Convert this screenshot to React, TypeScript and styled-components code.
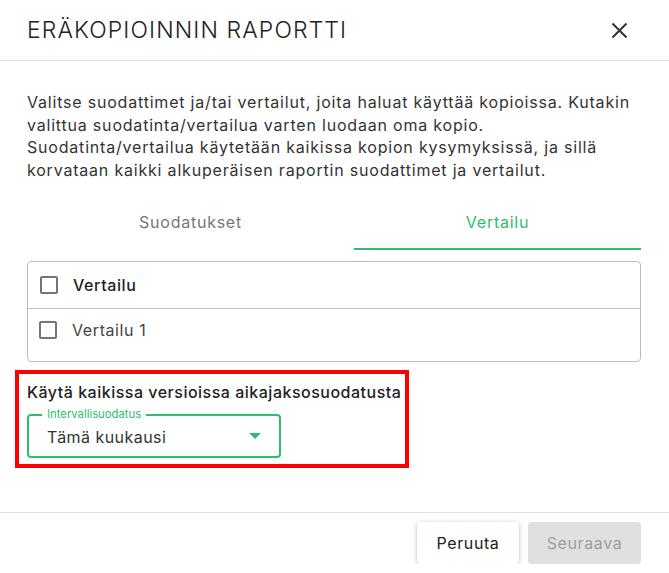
import React from "react";
import styled, { createGlobalStyle } from "styled-components";

const GlobalStyle = createGlobalStyle`
  html, body {
    margin: 0;
    padding: 0;
    background: #fff;
  }
  body {
    font-family: Inter, Lato, "Liberation Sans", sans-serif;
    color: #333;
  }
`;

const GREEN = "#2ebd6e";

const Dialog = styled.div`
  width: 669px;
  display: flex;
  flex-direction: column;
  background: #fff;
`;

const Header = styled.div`
  height: 60px;
  display: flex;
  align-items: center;
  justify-content: space-between;
  padding: 0 40px 0 27px;
  border-bottom: 1px solid #e0e0e0;
`;

const Title = styled.h2`
  margin: 0;
  font-size: 23px;
  font-weight: 300;
  letter-spacing: 1.1px;
  color: #222;
`;

const CloseButton = styled.button`
  border: none;
  background: none;
  padding: 0;
  width: 20px;
  height: 20px;
  display: flex;
  align-items: center;
  justify-content: center;
  cursor: pointer;
`;

const Content = styled.div`
  padding: 30px 28px 44px 27px;
  display: flex;
  flex-direction: column;
`;

const Intro = styled.p`
  margin: 0 -14px 0 0;
  font-size: 16px;
  letter-spacing: 0.8px;
  line-height: 22.5px;
  color: #333;
`;

const Tabs = styled.div`
  display: flex;
  margin-top: 21px;
`;

const Tab = styled.div<{ $active?: boolean; $width: number }>`
  width: ${(p) => p.$width}px;
  height: 48px;
  padding-bottom: 6px;
  display: flex;
  align-items: center;
  justify-content: center;
  font-size: 16px;
  letter-spacing: 0.75px;
  color: ${(p) => (p.$active ? GREEN : "#777")};
  border-bottom: 2px solid ${(p) => (p.$active ? GREEN : "transparent")};
  box-sizing: border-box;
`;

const ListBox = styled.div`
  margin-top: 11px;
  border: 1px solid #bdbdbd;
  border-radius: 4px;
  height: 101px;
  box-sizing: border-box;
`;

const Row = styled.label<{ $head?: boolean }>`
  display: flex;
  align-items: center;
  gap: 15px;
  height: ${(p) => (p.$head ? 46 : 41)}px;
  padding-left: ${(p) => (p.$head ? 12 : 11)}px;
  border-bottom: ${(p) => (p.$head ? "1px solid #bdbdbd" : "none")};
  font-size: 16px;
  letter-spacing: 0.6px;
  font-weight: ${(p) => (p.$head ? 500 : 400)};
  color: ${(p) => (p.$head ? "#222" : "#444")};
`;

const Box = styled.span`
  width: 18px;
  height: 18px;
  border: 2px solid #757575;
  border-radius: 2px;
  box-sizing: border-box;
  flex-shrink: 0;
`;

const Highlight = styled.div`
  margin: 8px 0 0 -12px;
  width: 394px;
  box-sizing: border-box;
  border: 4px solid #ff0000;
  padding: 8px 8px 6px 8px;
`;

const Label = styled.div`
  font-size: 16px;
  font-weight: 500;
  color: #222;
  letter-spacing: 0.5px;
  line-height: 20px;
  white-space: nowrap;
`;

const Select = styled.div`
  position: relative;
  margin-top: 12px;
  width: 254px;
  height: 44px;
  box-sizing: border-box;
  border: 2px solid ${GREEN};
  border-radius: 4px;
  display: flex;
  align-items: center;
  justify-content: space-between;
  padding: 0 18px 0 18px;
`;

const Legend = styled.span`
  position: absolute;
  top: -9px;
  left: 13px;
  padding: 0 5px;
  background: #fff;
  font-size: 11.3px;
  line-height: 14px;
  color: ${GREEN};
`;

const Value = styled.span`
  font-size: 16px;
  letter-spacing: 0.45px;
  color: #333;
  margin-top: 1px;
`;

const Caret = styled.span`
  width: 0;
  height: 0;
  border-left: 6px solid transparent;
  border-right: 6px solid transparent;
  border-top: 6px solid ${GREEN};
`;

const Footer = styled.div`
  border-top: 1px solid #e0e0e0;
  display: flex;
  justify-content: flex-end;
  gap: 9px;
  padding: 9px 28px 0 0;
`;

const Button = styled.button<{ $disabled?: boolean }>`
  height: 42px;
  padding: 0 18px;
  border: none;
  border-radius: 4px;
  font-family: inherit;
  font-size: 16px;
  letter-spacing: 0.6px;
  background: ${(p) => (p.$disabled ? "#e0e0e0" : "#fff")};
  color: ${(p) => (p.$disabled ? "#9e9e9e" : "#222")};
  box-shadow: ${(p) =>
    p.$disabled ? "none" : "0 1px 4px rgba(0,0,0,0.28)"};
  min-width: ${(p) => (p.$disabled ? 113 : 102)}px;
`;

export default function App() {
  return (
    <>
      <GlobalStyle />
      <Dialog>
        <Header>
          <Title>ERÄKOPIOINNIN RAPORTTI</Title>
          <CloseButton aria-label="Sulje">
            <svg width="17" height="17" viewBox="0 0 17 17">
              <path
                d="M1.5 1.5 L15.5 15.5 M15.5 1.5 L1.5 15.5"
                stroke="#333"
                strokeWidth="2"
                fill="none"
              />
            </svg>
          </CloseButton>
        </Header>
        <Content>
          <Intro>
            Valitse suodattimet ja/tai vertailut, joita haluat käyttää
            kopioissa. Kutakin valittua suodatinta/vertailua varten luodaan oma
            kopio.
            <br />
            Suodatinta/vertailua käytetään kaikissa kopion kysymyksissä, ja
            sillä korvataan kaikki alkuperäisen raportin suodattimet ja
            vertailut.
          </Intro>
          <Tabs>
            <Tab $width={327}>Suodatukset</Tab>
            <Tab $width={287} $active>
              Vertailu
            </Tab>
          </Tabs>
          <ListBox>
            <Row $head>
              <Box />
              Vertailu
            </Row>
            <Row>
              <Box />
              Vertailu 1
            </Row>
          </ListBox>
          <Highlight>
            <Label>Käytä kaikissa versioissa aikajaksosuodatusta</Label>
            <Select>
              <Legend>Intervallisuodatus</Legend>
              <Value>Tämä kuukausi</Value>
              <Caret />
            </Select>
          </Highlight>
        </Content>
        <Footer>
          <Button>Peruuta</Button>
          <Button $disabled>Seuraava</Button>
        </Footer>
      </Dialog>
    </>
  );
}
